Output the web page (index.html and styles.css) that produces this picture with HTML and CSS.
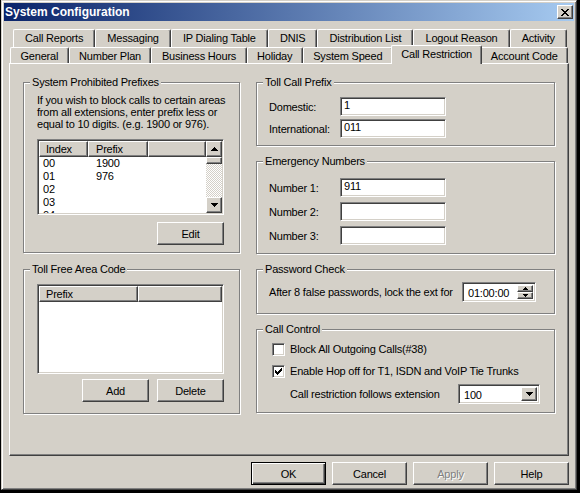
FILE: index.html
```html
<!DOCTYPE html>
<html lang="en">
<head>
    <meta charset="UTF-8">
    <title>System Configuration</title>
    <link rel="stylesheet" href="styles.css">
</head>
<body>
<div class="window">
    <div class="caption">
        <span class="caption-title">System Configuration</span>
        <span class="caption-close">
            <svg width="8" height="7" viewBox="0 0 8 7"><path d="M0 0h2v1H0z M6 0h2v1H6z M1 1h2v1H1z M5 1h2v1H5z M2 2h4v1H2z M3 3h2v1H3z M2 4h4v1H2z M1 5h2v1H1z M5 5h2v1H5z M0 6h2v1H0z M6 6h2v1H6z"/></svg>
        </span>
    </div>

    <div class="dialog">
        <div class="tab-row back">
            <div class="tab">Call Reports</div>
            <div class="tab">Messaging</div>
            <div class="tab">IP Dialing Table</div>
            <div class="tab">DNIS</div>
            <div class="tab">Distribution List</div>
            <div class="tab">Logout Reason</div>
            <div class="tab">Activity</div>
        </div>
        <div class="tab-row front">
            <div class="tab">General</div>
            <div class="tab">Number Plan</div>
            <div class="tab">Business Hours</div>
            <div class="tab">Holiday</div>
            <div class="tab">System Speed</div>
            <div class="tab active">Call Restriction</div>
            <div class="tab">Account Code</div>
        </div>

        <div class="panel">
            <div class="col col-left">
                <fieldset class="group g-prohibited">
                    <legend>System Prohibited Prefixes</legend>
                    <div class="body-prohibited">
                        <p class="note">If you wish to block calls to certain areas<br>from all extensions, enter prefix less or<br>equal to 10 digits. (e.g. 1900 or 976).</p>
                        <div class="listview lv-prefixes">
                            <div class="lv-main">
                                <div class="lv-head">
                                    <span class="hd hd-index">Index</span>
                                    <span class="hd hd-prefix">Prefix</span>
                                    <span class="hd hd-fill"></span>
                                </div>
                                <div class="lv-row"><span class="c-index">00</span><span class="c-prefix">1900</span></div>
                                <div class="lv-row"><span class="c-index">01</span><span class="c-prefix">976</span></div>
                                <div class="lv-row"><span class="c-index">02</span><span class="c-prefix"></span></div>
                                <div class="lv-row"><span class="c-index">03</span><span class="c-prefix"></span></div>
                                <div class="lv-row"><span class="c-index">04</span><span class="c-prefix"></span></div>
                            </div>
                            <div class="scrollbar">
                                <span class="raised sb-btn">
                                    <svg width="7" height="4" viewBox="0 0 7 4"><path d="M3 0h1v1h1v1h1v1h1v1H0V3h1V2h1V1h1z"/></svg>
                                </span>
                                <span class="raised sb-thumb"></span>
                                <span class="sb-track"></span>
                                <span class="raised sb-btn">
                                    <svg width="7" height="4" viewBox="0 0 7 4"><path d="M0 0h7v1H6v1H5v1H4v1H3V3H2V2H1V1H0z"/></svg>
                                </span>
                            </div>
                        </div>
                        <div class="btn-line">
                            <button class="btn">Edit</button>
                        </div>
                    </div>
                </fieldset>

                <fieldset class="group g-tollfree">
                    <legend>Toll Free Area Code</legend>
                    <div class="body-tollfree">
                        <div class="listview lv-tollfree">
                            <div class="lv-main">
                                <div class="lv-head">
                                    <span class="hd hd-wide">Prefix</span>
                                    <span class="hd hd-fill"></span>
                                </div>
                            </div>
                        </div>
                        <div class="btn-line">
                            <button class="btn">Add</button>
                            <button class="btn">Delete</button>
                        </div>
                    </div>
                </fieldset>
            </div>

            <div class="col col-right">
                <fieldset class="group g-tollcall">
                    <legend>Toll Call Prefix</legend>
                    <div class="body-tollcall">
                        <div class="field-row">
                            <span class="lbl lbl-short">Domestic:</span>
                            <span class="sunken edit">1</span>
                        </div>
                        <div class="field-row">
                            <span class="lbl lbl-short">International:</span>
                            <span class="sunken edit">011</span>
                        </div>
                    </div>
                </fieldset>

                <fieldset class="group g-emergency">
                    <legend>Emergency Numbers</legend>
                    <div class="body-emergency">
                        <div class="field-row">
                            <span class="lbl lbl-short">Number 1:</span>
                            <span class="sunken edit">911</span>
                        </div>
                        <div class="field-row">
                            <span class="lbl lbl-short">Number 2:</span>
                            <span class="sunken edit"></span>
                        </div>
                        <div class="field-row">
                            <span class="lbl lbl-short">Number 3:</span>
                            <span class="sunken edit"></span>
                        </div>
                    </div>
                </fieldset>

                <fieldset class="group g-password">
                    <legend>Password Check</legend>
                    <div class="body-password">
                        <div class="field-row">
                            <span class="lbl lbl-long">After 8 false passwords, lock the ext for</span>
                            <span class="sunken spin">
                                <span class="spin-value">01:00:00</span>
                                <span class="spin-btns">
                                    <span class="raised spin-btn">
                                        <svg width="5" height="3" viewBox="0 0 5 3"><path d="M2 0h1v1h1v1h1v1H0V2h1V1h1z"/></svg>
                                    </span>
                                    <span class="raised spin-btn">
                                        <svg width="5" height="3" viewBox="0 0 5 3"><path d="M0 0h5v1H4v1H3v1H2V2H1V1H0z"/></svg>
                                    </span>
                                </span>
                            </span>
                        </div>
                    </div>
                </fieldset>

                <fieldset class="group g-callctl">
                    <legend>Call Control</legend>
                    <div class="body-callctl">
                        <div class="check-row">
                            <span class="sunken checkbox"></span>
                            <span>Block All Outgoing Calls(#38)</span>
                        </div>
                        <div class="check-row second">
                            <span class="sunken checkbox">
                                <svg width="7" height="7" viewBox="0 0 7 7"><path d="M6 0h1v1H6z M5 1h2v1H5z M0 2h1v1H0z M4 2h3v1H4z M0 3h2v1H0z M3 3h3v1H3z M0 4h5v1H0z M1 5h3v1H1z M2 6h1v1H2z"/></svg>
                            </span>
                            <span>Enable Hop off for T1, ISDN and VoIP Tie Trunks</span>
                        </div>
                        <div class="combo-row">
                            <span class="lbl lbl-combo">Call restriction follows extension</span>
                            <span class="sunken combo">
                                <span class="combo-value">100</span>
                                <span class="raised combo-btn">
                                    <svg width="7" height="4" viewBox="0 0 7 4"><path d="M0 0h7v1H6v1H5v1H4v1H3V3H2V2H1V1H0z"/></svg>
                                </span>
                            </span>
                        </div>
                    </div>
                </fieldset>
            </div>
        </div>

        <div class="dialog-buttons">
            <button class="btn btn-wide default">OK</button>
            <button class="btn btn-wide">Cancel</button>
            <button class="btn btn-wide disabled">Apply</button>
            <button class="btn btn-wide">Help</button>
        </div>
    </div>
</div>
</body>
</html>
```

FILE: styles.css
```css
* {
    box-sizing: border-box;
}
body {
    margin: 0;
    background: #000;
    font-family: "Liberation Sans", Arial, sans-serif;
    font-size: 11px;
    letter-spacing: -0.2px;
    color: #000;
}

/* window frame + caption */
.window {
    width: 576px;
    height: 490px;
    margin-left: 1px;
    padding: 2px;
    background: #d4d0c8;
    border: 1px solid;
    border-color: #d4d0c8 #404040 #404040 #d4d0c8;
    box-shadow: inset 1px 1px #fff, inset -1px -1px #808080;
}
.caption {
    height: 18px;
    display: flex;
    align-items: center;
    justify-content: space-between;
    padding: 0 1px 0 1px;
    background: linear-gradient(to right, #0a246a, #a6caf0);
}
.caption-title {
    color: #fff;
    font-weight: bold;
    font-size: 12px;
    letter-spacing: 0;
}
.caption-close {
    width: 16px;
    height: 14px;
    display: flex;
    align-items: center;
    justify-content: center;
    background: #d4d0c8;
    border: 1px solid;
    border-color: #fff #404040 #404040 #fff;
    box-shadow: inset -1px -1px #808080;
}
svg {
    display: block;
    fill: #000;
    shape-rendering: crispEdges;
}

/* tabs */
.dialog {
    padding: 8px 5px 0 5px;
}
.tab-row {
    display: flex;
}
.tab-row.back {
    height: 18px;
    margin: 0 2px 0 4px;
}
.tab-row.front {
    height: 16px;
    margin: 0 1px 0 1px;
}
.tab {
    flex: 1 1 auto;
    padding: 0 5px;
    text-align: center;
    white-space: nowrap;
    border: 1px solid #fff;
    border-bottom: 0;
    border-right-color: #404040;
    border-radius: 2px 2px 0 0;
    box-shadow: inset -1px 0 #808080;
    background: #d4d0c8;
}
.back .tab {
    line-height: 17px;
}
.front .tab {
    line-height: 16px;
}
.tab.active {
    position: relative;
    z-index: 1;
    align-self: flex-start;
    height: 19px;
    margin: -2px -2px 0 -2px;
}

/* panel */
.panel {
    height: 393px;
    padding: 12px 0 0 13px;
    border: 1px solid;
    border-color: #fff #404040 #404040 #fff;
    box-shadow: inset -1px -1px #808080;
    display: grid;
    grid-template-columns: 217px 299px;
    column-gap: 16px;
    align-items: start;
}
.col {
    display: flex;
    flex-direction: column;
}
.col-left {
    gap: 10px;
}
.col-right {
    gap: 9px;
}

/* group boxes */
.group {
    margin: 0;
    padding: 0;
    min-width: 0;
    border: 1px solid #808080;
    box-shadow: inset 1px 1px #fff, 1px 1px #fff;
}
.group legend {
    margin-left: 6px;
    padding: 0 2px;
    line-height: 13px;
    background: #d4d0c8;
}
.g-prohibited { height: 177px; }
.g-tollfree { height: 151px; }
.g-tollcall { height: 70px; }
.g-emergency { height: 99px; }
.g-password { height: 51px; }
.g-callctl { height: 90px; }

.body-prohibited {
    padding: 5px 0 0 13px;
}
.body-tollfree {
    padding: 8px 0 0 13px;
}
.body-tollcall {
    padding: 8px 0 0 12px;
    display: flex;
    flex-direction: column;
    gap: 3px;
}
.body-emergency {
    padding: 10px 0 0 12px;
    display: flex;
    flex-direction: column;
    gap: 5px;
}
.body-password {
    padding: 6px 0 0 12px;
}
.body-callctl {
    padding: 5px 0 0 15px;
}

.note {
    margin: 0;
    line-height: 12px;
}

/* 3d helpers */
.raised {
    background: #d4d0c8;
    border: 1px solid;
    border-color: #fff #404040 #404040 #fff;
    box-shadow: inset -1px -1px #808080;
}
.sunken {
    background: #fff;
    border: 1px solid;
    border-color: #808080 #fff #fff #808080;
    box-shadow: inset 1px 1px #404040, inset -1px -1px #d4d0c8;
}

/* list views */
.listview {
    display: flex;
    width: 187px;
    padding: 1px;
    background: #fff;
    border: 1px solid;
    border-color: #808080 #fff #fff #808080;
    box-shadow: inset 1px 1px #404040, inset -1px -1px #d4d0c8;
}
.lv-prefixes {
    height: 76px;
    margin-top: 9px;
}
.lv-tollfree {
    height: 90px;
}
.lv-main {
    flex: 1;
    overflow: hidden;
}
.lv-head {
    display: flex;
    height: 16px;
}
.hd {
    height: 16px;
    line-height: 14px;
    padding-left: 6px;
    background: #d4d0c8;
    border: 1px solid;
    border-color: #fff #404040 #404040 #fff;
    box-shadow: inset -1px -1px #808080;
}
.hd-index { width: 49px; }
.hd-prefix { width: 60px; padding-left: 7px; }
.hd-wide { width: 99px; }
.hd-fill { flex: 1; }
.lv-row {
    display: flex;
    height: 13px;
    line-height: 13px;
}
.c-index {
    width: 49px;
    padding-left: 4px;
}
.c-prefix {
    padding-left: 8px;
}

.scrollbar {
    width: 16px;
    display: flex;
    flex-direction: column;
}
.sb-btn {
    height: 16px;
    display: flex;
    align-items: center;
    justify-content: center;
}
.sb-thumb {
    height: 7px;
}
.sb-track {
    flex: 1;
    background: repeating-conic-gradient(#fff 0 25%, #d4d0c8 0 50%) 0 0 / 2px 2px;
}

/* buttons */
.btn {
    width: 67px;
    height: 23px;
    padding: 0;
    font: inherit;
    letter-spacing: inherit;
    color: #000;
    background: #d4d0c8;
    border: 1px solid;
    border-color: #fff #404040 #404040 #fff;
    box-shadow: inset -1px -1px #808080;
}
.btn-line {
    display: flex;
    justify-content: flex-end;
    gap: 8px;
    width: 187px;
    margin-top: 7px;
}
.body-tollfree .btn-line {
    margin-top: 5px;
}
.dialog-buttons {
    display: flex;
    justify-content: flex-end;
    gap: 6px;
    margin-top: 6px;
}
.btn-wide {
    width: 75px;
}
.btn.default {
    border-color: #000;
    box-shadow: inset 1px 1px #fff, inset -1px -1px #404040, inset -2px -2px #808080;
}
.btn.disabled {
    color: #808080;
    text-shadow: 1px 1px 0 #fff;
}

/* edit fields */
.field-row {
    display: flex;
    align-items: center;
}
.lbl-short {
    width: 71px;
}
.lbl-long {
    width: 193px;
}
.edit {
    width: 106px;
    height: 19px;
    line-height: 15px;
    padding: 0 3px;
}
.spin {
    width: 74px;
    height: 20px;
    padding: 2px;
    display: flex;
}
.spin-value {
    flex: 1;
    line-height: 16px;
    padding-left: 3px;
}
.spin-btns {
    width: 16px;
    display: flex;
    flex-direction: column;
}
.spin-btn {
    flex: 1;
    display: flex;
    align-items: center;
    justify-content: center;
}

/* call control */
.check-row {
    display: flex;
    align-items: center;
    height: 16px;
}
.check-row.second {
    margin-top: 6px;
}
.checkbox {
    width: 13px;
    height: 13px;
    margin-right: 5px;
    padding: 2px 0 0 2px;
}
.combo-row {
    display: flex;
    align-items: center;
    margin: 5px 0 0 18px;
}
.lbl-combo {
    width: 168px;
}
.combo {
    width: 82px;
    height: 20px;
    padding: 2px;
    display: flex;
}
.combo-value {
    flex: 1;
    line-height: 16px;
    padding-left: 3px;
}
.combo-btn {
    width: 16px;
    display: flex;
    align-items: center;
    justify-content: center;
}
```
